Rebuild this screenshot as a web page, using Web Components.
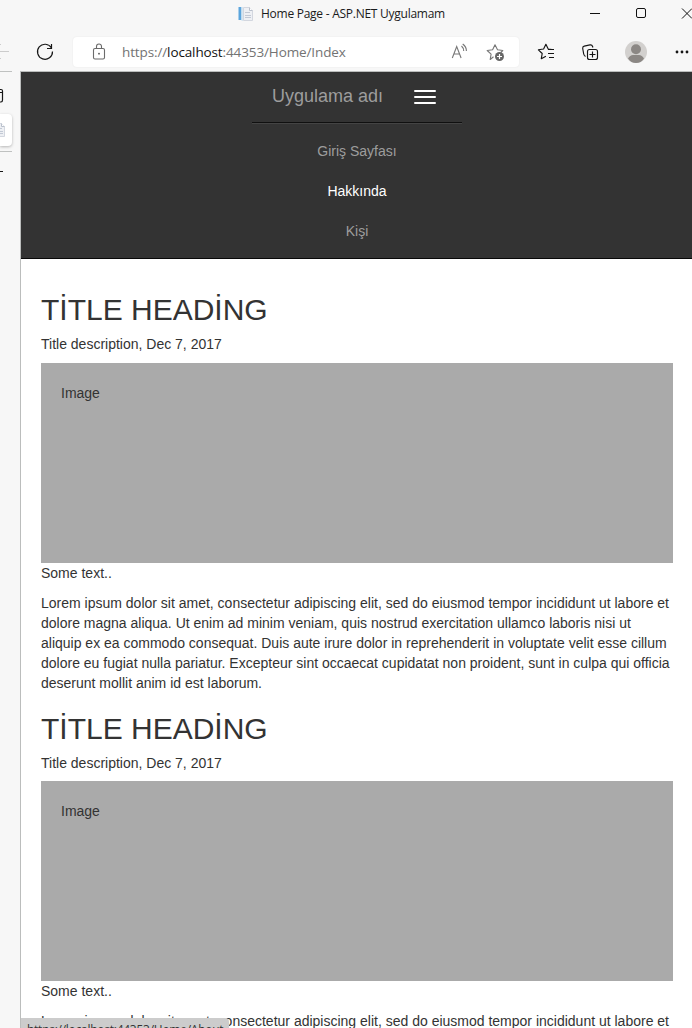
<!DOCTYPE html>
<html lang="tr">
<head>
<meta charset="utf-8">
<title>Home Page - ASP.NET Uygulamam</title>
<style>
html,body{margin:0;height:1028px;overflow:hidden;background:#f7f7f7}
</style>
</head>
<body>
<browser-window></browser-window>
<script>
const define = (name, html) => customElements.define(name, class extends HTMLElement {
  constructor() {
    super();
    const t = document.createElement('template');
    t.innerHTML = html;
    this.attachShadow({mode: 'open'}).append(t.content.cloneNode(true));
  }
});

define('doc-icon', `<style>:host{display:block;width:16px;height:16px}svg{display:block}</style>
<svg width="16" height="16" viewBox="0 0 16 16"><path d="M5.500 1.500h6l3 3v10h-9z" fill="#eef0f4" stroke="#d3d7df"/><path d="M11.500 1.500v3h3" fill="#fff" stroke="#b9c0cc"/><path d="M7 6.500h5M7 9.500h6M7 11.500h6" stroke="#c2c9d5"/><path d="M.5 1h3v13h-3z" fill="#5aa5dd"/><path d="M3.500 1v14h1.500V1z" fill="#d6e6f2"/></svg>`);

define('title-bar', `<style>
:host{display:flex;height:29px;align-items:center;box-sizing:border-box;padding-left:238px;color:#1b1b1b;font:12px/16px "Open Sans","Noto Sans",sans-serif}
doc-icon{margin:-2px 7px 0 0}
.title{width:200px;white-space:nowrap;letter-spacing:-.26px;margin-top:-1px}
.controls{margin-left:129px;width:102px;height:29px;flex:none}svg{display:block}</style>
<doc-icon></doc-icon><span class="title">Home Page - ASP.NET Uygulamam</span>
<svg class="controls" viewBox="590 0 102 29" fill="none" stroke="#111"><path d="M590 13.500h10"/><rect x="636.500" y="8.500" width="9" height="9" rx="1.500"/><path d="M682 8.500l10 10M692 8.500l-10 10"/></svg>`);

define('address-bar', `<style>
:host{display:flex;align-items:center;width:446px;height:30px;background:#fff;border-radius:4px;box-shadow:0 0 2px #00000012;color:#737373;font:13.500px/20px "Open Sans","Noto Sans",sans-serif}
svg{display:block;flex:none}.url{width:318px;margin-left:13px;white-space:nowrap;letter-spacing:-.12px}b{font-weight:400;color:#111}
</style>
<svg width="36" height="30" viewBox="73 37 36 30" fill="none" stroke="#6b6b6b" stroke-width="1.100"><rect x="93.500" y="48.500" width="11" height="10.500" rx="1.500"/><path d="M96.500 48.500v-2a2.500 2.500 0 0 1 5 0v2"/><circle cx="99" cy="53.700" r=".9" fill="#555" stroke="none"/></svg>
<span class="url">https://<b>localhost</b>:44353/Home/Index</span>
<svg width="79" height="30" viewBox="440 37 79 30" fill="none" stroke="#777" stroke-width="1.100"><path d="M452.300 58l4.400-11.500 4.400 11.500M453.800 54h5.800M461.500 46q2.300 2 2.200 5M462.700 44q3.800 2.800 3.700 7"/><path d="M493.500 56.800l-3.300 2.700.9-5.300-3.900-3.700 5.400-.8 2.400-5 2.500 5 5.300.8-2 2" stroke-linejoin="round"/><circle cx="499.500" cy="56.500" r="4.500" fill="#666" stroke="none"/><path d="M497 56.500h5M499.500 54v5" stroke="#fff" stroke-width="1.200"/></svg>`);

define('tool-bar', `<style>:host{display:flex;height:42px;align-items:flex-start;box-sizing:border-box;padding-top:8px}svg{display:block;flex:none}</style>
<svg width="73" height="34" viewBox="0 37 73 34" fill="none" stroke="#161616" stroke-width="1.200"><path d="M0 51.500h9M-1 46l2-2M-1 57l2 2" stroke="#ccc" stroke-width="1"/><path d="M51.500 48A7.500 7.500 0 1 0 52.500 51.500M51.500 44v4.500h-4.500"/></svg>
<address-bar></address-bar>
<svg width="173" height="34" viewBox="519 37 173 34" fill="none" stroke="#151515" stroke-width="1.150" stroke-linejoin="round"><path d="M552 49.500l-3.800-.5-2.300-4.700-2.300 4.700-5.200.8 3.800 3.700-.9 5.200 4.600-2.400M548 49.500h6M548 53.500h6M549 57.500h5"/><path d="M585.500 56.500q-1.500-1-1.800-2.500l-1-5.500q-.2-2 1.500-2.400l5.800-1.200q2-.3 2.600 1.600l.3 1"/><rect x="587.500" y="49.500" width="10" height="10" rx="2"/><path d="M589.500 54.500h6M592.500 51.500v6"/><g stroke="none"><circle cx="636" cy="52" r="11" fill="#d2d0ce"/><circle cx="636" cy="49.300" r="5" fill="#8b8784"/><path d="M628 58.500q2-3.500 5-3.500h6q3 0 5 3.500-3 4.500-8 4.500t-8-4.500" fill="#8b8784"/><g fill="#161616"><circle cx="677" cy="52" r="1.400"/><circle cx="682" cy="52" r="1.400"/><circle cx="687" cy="52" r="1.400"/></g></g></svg>`);

define('tab-rail', `<style>:host{display:flex;flex-direction:column;width:20px;box-sizing:border-box}
hr{border:0;height:1px;width:12px;background:#bfc1c0;margin:0;flex:none}
.top{height:42px}.tab{height:32px;width:12px;background:#fff;border-radius:0 4px 4px 0;box-shadow:0 1px 3px #0004;margin-bottom:5px;box-sizing:border-box;padding-top:8px}doc-icon{margin-left:-10px}svg{display:block}</style>
<hr><svg class="top" width="20" height="42" viewBox="0 72 20 42" fill="none" stroke="#161616" stroke-width="1.200"><path d="M0 89.500h1q1.500 0 1.500 1.500v9q0 2-1.500 2H0M0 92.500h3"/></svg>
<div class="tab"><doc-icon></doc-icon></div><hr><svg width="20" height="40" viewBox="0 152 20 40"><path d="M0 171.500h3" stroke="#161616"/></svg>`);

define('nav-link', `<style>:host{display:block;padding:10px 0;font-size:14px;line-height:20px;color:#9d9d9d}:host([active]){color:#fff}</style><slot></slot>`);

define('nav-menu', `<style>
:host{display:flex;flex-direction:column;align-items:center;box-sizing:border-box;height:187px;background:#333;border-bottom:1px solid #080808;text-align:center}
header{display:flex;width:210px;height:51px;box-sizing:border-box;padding:14px 26px 16px 20.500px;justify-content:space-between;align-items:center;color:#9d9d9d;font-size:18px;line-height:20px;border-bottom:1px solid #101010;box-shadow:0 1px #444}
.bars{display:grid;gap:4px;width:22px;margin-top:1px}.bars i{height:2px;border-radius:1px;background:#fff}
nav{margin-top:8px;width:210px;padding-left:1px}
</style><header><span>Uygulama adı</span><span class="bars"><i></i><i></i><i></i></span></header>
<nav><nav-link>Giriş Sayfası</nav-link><nav-link active>Hakkında</nav-link><nav-link>Kişi</nav-link></nav>`);

define('blog-post', `<style>
:host{display:block;padding-top:19px}
h2{margin:0 0 11px;font-weight:400;font-size:30px;line-height:33px}
h5{margin:10px 0;font-weight:400;font-size:14px;line-height:15.400px}
.image{height:200px;box-sizing:border-box;padding:20px;background:#aaa}p{margin:0 0 10px}.body{margin:0}
</style><h2>TİTLE HEADİNG</h2><h5>Title description, Dec 7, 2017</h5><div class="image">Image</div><p>Some text..</p><p class="body"><slot></slot></p>`);

define('status-bubble', `<style>:host{display:block;position:absolute;left:0;bottom:0;width:208px;height:10px;overflow:hidden;background:#ccc;border-radius:0 4px 0 0;color:#333;font:12px/16px "Open Sans","Noto Sans",sans-serif}
span{display:block;padding:4px 0 0 6px;white-space:nowrap;letter-spacing:-.26px}</style><span><slot></slot></span>`);

define('web-page', `<style>
:host{display:block;position:relative;overflow:hidden;box-sizing:border-box;background:#fff;border-left:1px solid #bbbdbc;border-top:1px solid #bbbdbc;color:#333;font:14px/20px "Liberation Sans",Arial,sans-serif}
main{padding:15.400px 19px 0 20px}
</style><nav-menu></nav-menu><main>
<blog-post>Lorem ipsum dolor sit amet, consectetur adipiscing elit, sed do eiusmod tempor incididunt ut labore et dolore magna aliqua. Ut enim ad minim veniam, quis nostrud exercitation ullamco laboris nisi ut aliquip ex ea commodo consequat. Duis aute irure dolor in reprehenderit in voluptate velit esse cillum dolore eu fugiat nulla pariatur. Excepteur sint occaecat cupidatat non proident, sunt in culpa qui officia deserunt mollit anim id est laborum.</blog-post>
<blog-post>Lorem ipsum dolor sit amet, consectetur adipiscing elit, sed do eiusmod tempor incididunt ut labore et</blog-post>
</main><status-bubble>https://localhost:44353/Home/About</status-bubble>`);

define('browser-window', `<style>
:host{display:grid;width:692px;height:1028px;grid-template:29px 42px 957px / 20px 672px;background:#f7f7f7;overflow:hidden}
title-bar,tool-bar{grid-column:1/3}
</style><title-bar></title-bar><tool-bar></tool-bar><tab-rail></tab-rail><web-page></web-page>`);
</script>
</body>
</html>
